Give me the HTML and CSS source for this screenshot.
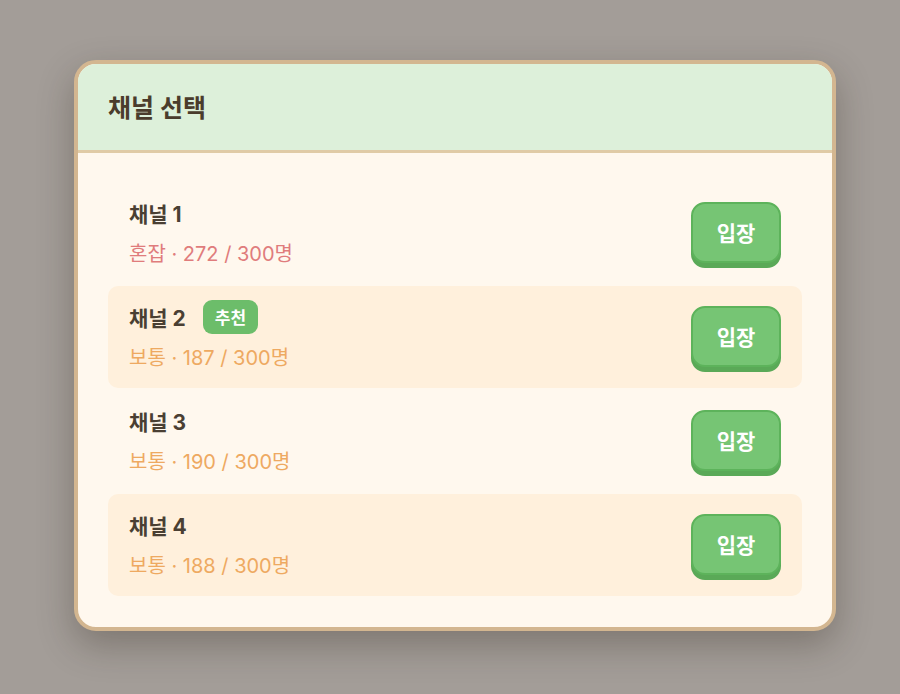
FILE: index.html
```html
<!DOCTYPE html>
<html lang="ko">

<head>
    <meta charset="UTF-8">
    <meta name="viewport" content="width=device-width, initial-scale=1.0">
    <title>채널 선택</title>
    <link rel="stylesheet" href="styles.css">
</head>

<body>
    <div class="modal">
        <div class="modal-header">
            <h2>채널 선택</h2>
        </div>

        <ul class="channel-list">
            <li class="channel">
                <div class="info">
                    <div class="name">채널 1</div>
                    <div class="status busy">혼잡 · 272 / 300명</div>
                </div>
                <button class="enter">입장</button>
            </li>
            <li class="channel alt">
                <div class="info">
                    <div class="name">채널 2 <span class="badge">추천</span></div>
                    <div class="status normal">보통 · 187 / 300명</div>
                </div>
                <button class="enter">입장</button>
            </li>
            <li class="channel">
                <div class="info">
                    <div class="name">채널 3</div>
                    <div class="status normal">보통 · 190 / 300명</div>
                </div>
                <button class="enter">입장</button>
            </li>
            <li class="channel alt">
                <div class="info">
                    <div class="name">채널 4</div>
                    <div class="status normal">보통 · 188 / 300명</div>
                </div>
                <button class="enter">입장</button>
            </li>
        </ul>
    </div>
</body>

</html>
```

FILE: styles.css
```css
* {
    box-sizing: border-box;
    margin: 0;
    padding: 0;
}

body {
    background-color: #a39d98;
    height: 100vh;
    padding: 60px 0 0 74px;
    font-family: Inter, 'Noto Sans CJK KR', sans-serif;
}

.modal {
    width: 762px;
    background-color: #fff8ee;
    border: 4px solid #d3b690;
    border-radius: 22px;
    overflow: hidden;
    box-shadow: 0 14px 36px rgba(40, 30, 20, 0.3);
}

.modal-header {
    height: 89px;
    display: flex;
    align-items: center;
    padding: 0 30px;
    background-color: #ddf0da;
    border-bottom: 3px solid #e0cba6;
}

.modal-header h2 {
    font-size: 25px;
    font-weight: 700;
    color: #4a3c2c;
    margin-top: -2px;
}

.channel-list {
    list-style-type: none;
    display: flex;
    flex-direction: column;
    gap: 2px;
    padding: 29px 30px 31px;
}

.channel {
    height: 102px;
    display: flex;
    align-items: center;
    justify-content: space-between;
    padding: 0 21px;
    border-radius: 10px;
}

.channel.alt {
    background-color: #fff0dc;
}

.name {
    display: flex;
    align-items: center;
    height: 26px;
    font-size: 21px;
    font-weight: 700;
    color: #4a3f33;
}

.badge {
    display: flex;
    align-items: center;
    height: 34px;
    margin-left: 17px;
    padding: 0 12px;
    border-radius: 9px;
    background-color: #6cbd6a;
    color: #fff;
    font-size: 17px;
    font-weight: 700;
}

.status {
    margin-top: 15px;
    font-size: 20px;
    line-height: 26px;
}

.status.busy {
    color: #e07c7c;
}

.status.normal {
    color: #eea961;
}

.enter {
    width: 90px;
    height: 61px;
    margin-top: -2px;
    border: 2px solid #5db35b;
    border-radius: 14px;
    background-color: #76c574;
    box-shadow: 0 5px 0 #5aa957;
    color: #fff;
    font-family: inherit;
    font-size: 21px;
    font-weight: 700;
    cursor: pointer;
}
```
